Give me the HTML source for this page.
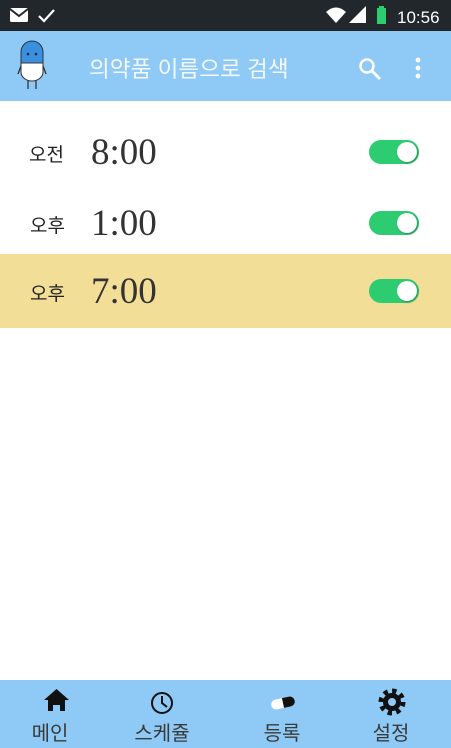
<!DOCTYPE html>
<html><head><meta charset="utf-8"><style>
*{margin:0;padding:0;box-sizing:border-box}
body{width:451px;height:748px;position:relative;background:#fff;font-family:"Liberation Sans","Noto Sans CJK KR",sans-serif;overflow:hidden}
.status{position:absolute;top:0;left:0;width:451px;height:31px;background:#22272b;color:#fff}
.app{position:absolute;top:31px;left:0;width:451px;height:70px;background:#8ecaf5}
.row{position:absolute;left:0;width:451px;height:74px}
.ap{position:absolute;left:29px;font-size:19px;color:#222}
.tm{position:absolute;left:91px;font-family:"Liberation Serif",serif;font-size:37px;color:#333}
.tg{position:absolute;left:369px;width:50px;height:24px;border-radius:12px;background:#2ecc71}
.tg::after{content:"";position:absolute;right:2px;top:2px;width:20px;height:20px;border-radius:50%;background:#fff;box-shadow:1px 1px 2px rgba(0,0,0,.3)}
.nav{position:absolute;top:680px;left:0;width:451px;height:68px;background:#8ecaf5}
.ni{position:absolute;top:37px;font-size:20px;color:#3a3a3a;text-align:center;width:80px}
</style></head><body>
<div class="status">
<svg width="451" height="31" style="position:absolute;left:0;top:0">
<rect x="10" y="8" width="18" height="14" rx="1.5" fill="#fff"/><path d="M10 9 L19 16 L28 9" stroke="#22272b" stroke-width="2" fill="none"/>
<path d="M39 16 L44 21 L54 10" stroke="#fff" stroke-width="2.2" fill="none"/>
<path d="M326 12 Q336 3 346 12 L336 23 Z" fill="#fff"/>
<path d="M349 23 L366 23 L366 6 Z" fill="#fff"/>
<rect x="377" y="8" width="9" height="16" fill="#2ecc71"/><rect x="379" y="6" width="5" height="2" fill="#2ecc71"/>
<text x="397" y="23" fill="#fff" font-size="17" font-family="Liberation Sans">10:56</text>
</svg></div>
<div class="app">
<svg width="451" height="70" style="position:absolute;left:0;top:0">
<path d="M21 32 V21 a11 11 0 0 1 22 0 V32 Z" fill="#3b8fe0" stroke="#333" stroke-width="1"/>
<path d="M21 32 V41 a11 9 0 0 0 22 0 V32 Z" fill="#fff" stroke="#333" stroke-width="1"/>
<circle cx="28" cy="23" r="1.3" fill="#222"/><circle cx="36" cy="23" r="1.3" fill="#222"/>
<path d="M28 50 V58 M36 50 V58 M21 35 L18 43 M43 35 L46 43" stroke="#333" stroke-width="1.3"/>
<circle cx="367" cy="35" r="6.5" stroke="#fff" stroke-width="2.5" fill="none"/><path d="M372 40 L380 48" stroke="#fff" stroke-width="3"/>
<circle cx="418" cy="29" r="2.4" fill="#fff"/><circle cx="418" cy="37" r="2.4" fill="#fff"/><circle cx="418" cy="45" r="2.4" fill="#fff"/>
</svg>
<div style="position:absolute;left:89px;top:20px;font-size:22.6px;color:#f4f8fc">의약품 이름으로 검색</div>
</div>
<div class="row" style="top:115px"><div class="ap" style="top:25px">오전</div><div class="tm" style="top:16px">8:00</div><div class="tg" style="top:25px"></div></div>
<div class="row" style="top:186px"><div class="ap" style="top:25px;left:30px">오후</div><div class="tm" style="top:16px">1:00</div><div class="tg" style="top:25px"></div></div>
<div class="row" style="top:254px;background:#f2de97"><div class="ap" style="top:25px;left:30px">오후</div><div class="tm" style="top:16px">7:00</div><div class="tg" style="top:25px"></div></div>
<div class="nav">
<svg width="451" height="40" style="position:absolute;left:0;top:0">
<path d="M44 20 L48 20 L48 31 L53 31 L53 25 L60 25 L60 31 L65 31 L65 20 L69 20 L56.5 9 Z" fill="#111"/>
<circle cx="162" cy="23" r="10" stroke="#111" stroke-width="2" fill="none"/><path d="M162 16 V23 L167 27" stroke="#111" stroke-width="2" fill="none"/>
<g transform="rotate(-12 283 23)"><rect x="271" y="18" width="24" height="10" rx="5" fill="#fff"/><path d="M283 18 H290 a5 5 0 0 1 0 10 H283 Z" fill="#111"/></g>
<circle cx="392" cy="22" r="9" fill="#111"/><circle cx="392" cy="22" r="11" fill="none" stroke="#111" stroke-width="5" stroke-dasharray="4.3 4.3"/><circle cx="392" cy="22" r="4" fill="#8ecaf5"/>
</svg>
<div class="ni" style="left:10px">메인</div>
<div class="ni" style="left:122px">스케쥴</div>
<div class="ni" style="left:242px">등록</div>
<div class="ni" style="left:351px">설정</div>
</div>
</body></html>
